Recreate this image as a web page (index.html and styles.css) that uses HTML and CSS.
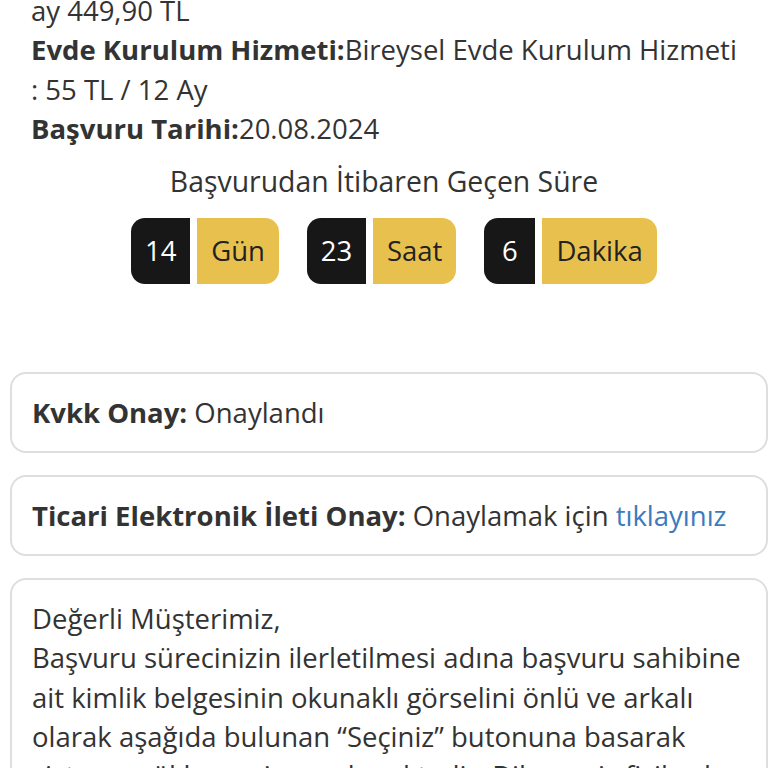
FILE: index.html
```html
<!DOCTYPE html>
<html lang="tr">
<head>
<meta charset="utf-8">
<title>Başvuru Detayı</title>
<link rel="stylesheet" href="styles.css">
</head>
<body>
<div class="page">
  <section class="summary">
    <p class="info">ay 449,90 TL<br><b>Evde Kurulum Hizmeti:</b>Bireysel Evde Kurulum Hizmeti<br>: 55 TL / 12 Ay<br><b>Başvuru Tarihi:</b>20.08.2024</p>
    <h2 class="elapsed-title">Başvurudan İtibaren Geçen Süre</h2>
    <div class="timer">
      <div class="tgroup"><span class="num">14</span><span class="unit">Gün</span></div>
      <div class="tgroup"><span class="num">23</span><span class="unit">Saat</span></div>
      <div class="tgroup"><span class="num">6</span><span class="unit">Dakika</span></div>
    </div>
  </section>
  <div class="card"><b>Kvkk Onay:</b> Onaylandı</div>
  <div class="card"><b>Ticari Elektronik İleti Onay:</b> Onaylamak için <a href="#" class="link">tıklayınız</a></div>
  <div class="card">Değerli Müşterimiz,<br>Başvuru sürecinizin ilerletilmesi adına başvuru sahibine<br>ait kimlik belgesinin okunaklı görselini önlü ve arkalı<br>olarak aşağıda bulunan “Seçiniz” butonuna basarak<br>sisteme yüklemeniz gerekmektedir. Dilerseniz fiziksel</div>
</div>
</body>
</html>
```

FILE: styles.css
```css
html, body {
  margin: 0;
  padding: 0;
  background: #fff;
}
body {
  font-family: "Open Sans", "Noto Sans", sans-serif;
  font-size: 27.5px;
  line-height: 39.4px;
  color: #333;
  overflow: hidden;
}
.page {
  margin-top: -9px;
}
.summary {
  padding: 0 31px;
}
.info {
  margin: 0;
  white-space: nowrap;
}
.info b, .card b {
  font-weight: 700;
}
.elapsed-title {
  margin: 13px 0 0;
  font-size: 28.4px;
  line-height: 39.4px;
  font-weight: 400;
  text-align: center;
}
.timer {
  display: flex;
  justify-content: center;
  gap: 28px;
  margin-top: 17px;
  padding-left: 20px;
}
.tgroup {
  display: flex;
  gap: 7px;
  height: 66px;
}
.num {
  display: flex;
  align-items: center;
  justify-content: center;
  min-width: 51px;
  padding: 0 4px;
  box-sizing: border-box;
  background: #171717;
  color: #fff;
  border-radius: 14px 0 0 14px;
}
.tgroup:nth-child(1) .num,
.tgroup:nth-child(2) .num {
  width: 59px;
}
.unit {
  display: flex;
  align-items: center;
  padding: 0 14px;
  background: #e8c04e;
  color: #222;
  border-radius: 0 14px 14px 0;
}
.card {
  margin: 0 0 21.5px 10px;
  padding: 19px 20px;
  border: 2px solid #dedede;
  border-radius: 16px;
  white-space: nowrap;
  width: 758px;
  box-sizing: border-box;
}
.summary + .card {
  margin-top: 88px;
}
.link {
  color: #3a7bbd;
  text-decoration: none;
}
```
